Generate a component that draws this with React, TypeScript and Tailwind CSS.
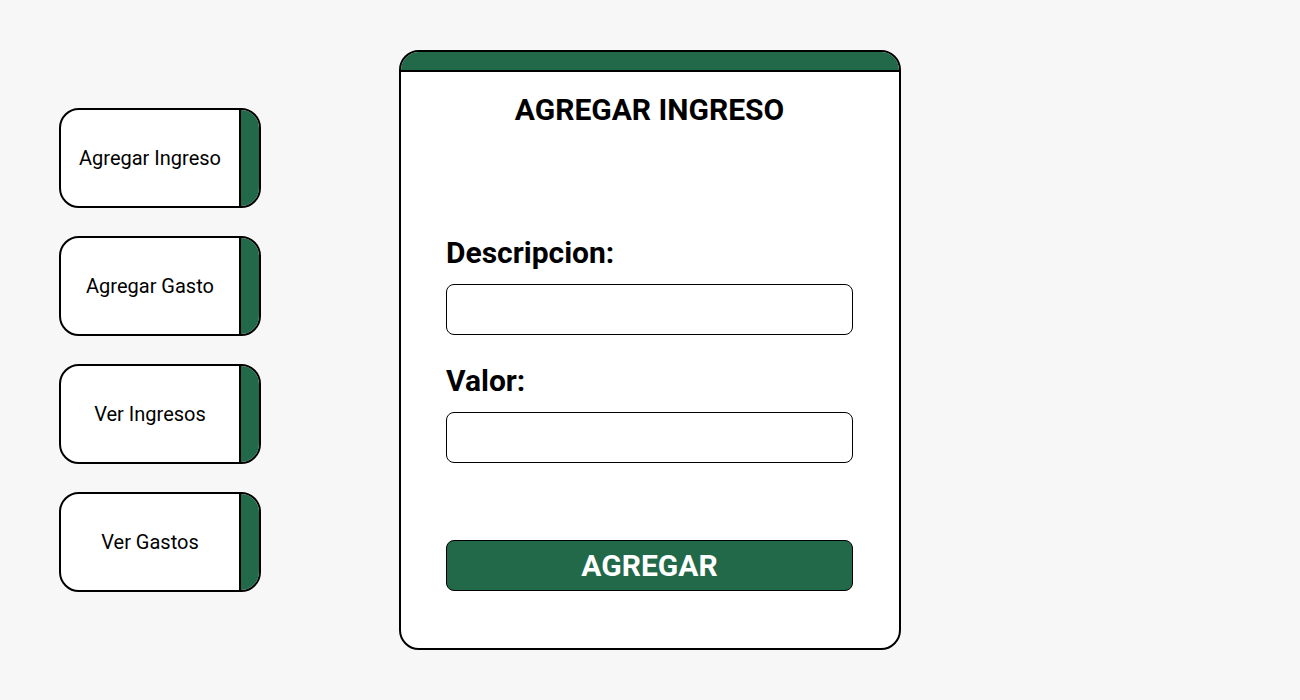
const menu = ['Agregar Ingreso', 'Agregar Gasto', 'Ver Ingresos', 'Ver Gastos'];

function MenuButton({ label }: { label: string }) {
  return (
    <button className="flex h-[100px] w-[202px] overflow-hidden rounded-[20px] border-2 border-black bg-white">
      <span className="flex flex-1 items-center justify-center text-[20px] text-black">{label}</span>
      <span className="h-full w-[20px] border-l-2 border-black bg-[#22694a]" />
    </button>
  );
}

export default function App() {
  return (
    <div className="flex min-h-[700px] bg-[#f7f7f7] pl-[59px] pt-[50px] font-['Roboto',sans-serif]">
      <nav className="mt-[58px] flex flex-col gap-[28px]">
        {menu.map((m) => (
          <MenuButton key={m} label={m} />
        ))}
      </nav>

      <section className="ml-[138px] flex h-[600px] w-[502px] flex-col overflow-hidden rounded-[20px] border-2 border-black bg-white">
        <div className="h-[20px] border-b-2 border-black bg-[#22694a]" />
        <div className="flex flex-1 flex-col pl-[45px] pr-[46px]">
          <h1 className="mt-[21px] text-center text-[30px] font-bold leading-[34px] text-black">AGREGAR INGRESO</h1>

          <label className="mt-[109px] text-[30px] font-bold leading-[34px] text-black">Descripcion:</label>
          <input className="mt-[14px] h-[51px] w-full rounded-[8px] border border-black bg-white px-3 outline-none" />

          <label className="mt-[29px] text-[30px] font-bold leading-[34px] text-black">Valor:</label>
          <input className="mt-[14px] h-[51px] w-full rounded-[8px] border border-black bg-white px-3 outline-none" />

          <button className="mt-[77px] h-[51px] w-full rounded-[8px] border border-black bg-[#22694a] text-[30px] font-bold text-white">
            AGREGAR
          </button>
        </div>
      </section>
    </div>
  );
}
